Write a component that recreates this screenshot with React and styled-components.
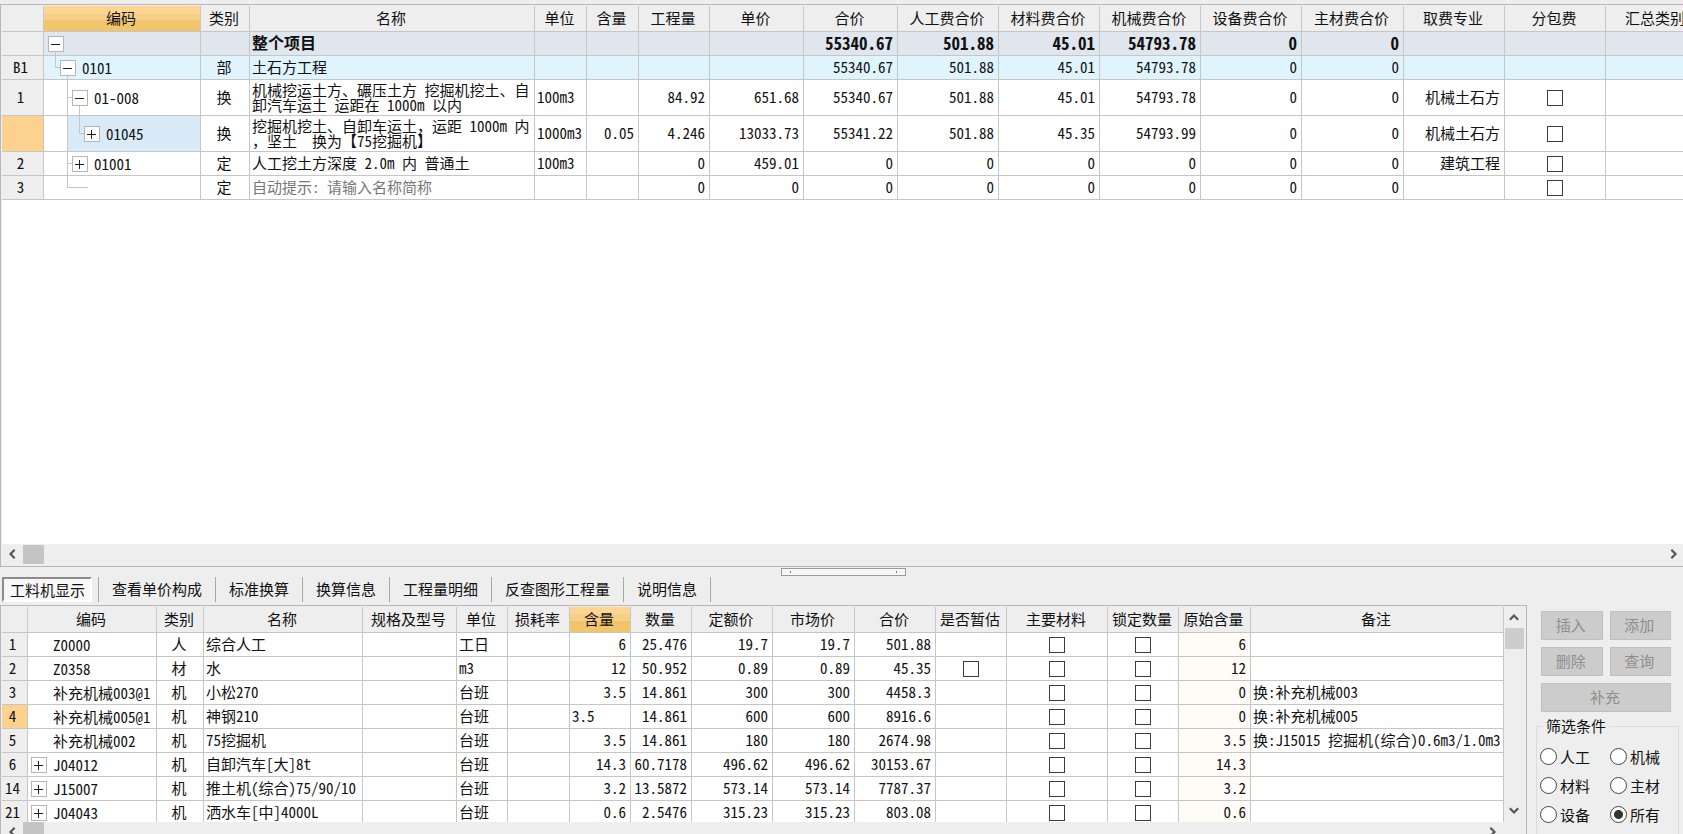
import React, { useState } from 'react';
import styled, { createGlobalStyle, css } from 'styled-components';

const LINE = '#c6c6c6';
const FACE = '#eeeeee';

const GlobalStyle = createGlobalStyle`
    * {
        box-sizing: border-box;
    }

    body {
        margin: 0;
        background: ${FACE};
    }

    body, button, input {
        font-family: "Noto Sans CJK SC", sans-serif;
        font-size: 15px;
        line-height: 20px;
        font-feature-settings: "hwid" 1;
        color: #111;
    }
`;

const Window = styled.div`
    display: flex;
    flex-direction: column;
    height: 100vh;
    overflow: hidden;
    padding-top: 4px;
`;

const TopPanel = styled.section`
    flex: 1;
    min-height: 0;
    display: flex;
    flex-direction: column;
    border: 1px solid #b8b8b8;
    border-width: 1px 0 1px 1px;
    padding: 1px 0 0 1px;
`;

const SheetArea = styled.div`
    flex: 1;
    min-height: 0;
    overflow: hidden;
    background: #fff;
`;

const Sheet = styled.table`
    table-layout: fixed;
    width: ${p => p.$width};
    border-collapse: separate;
    border-spacing: 0;
`;

const activeHead = css`
    background: linear-gradient(#fed691 0 30%, #f4d089 30% 55%, #f2c56b 55% 100%);
`;

const HeadCell = styled.th`
    height: 26px;
    padding: 0 2px 2px 0;
    font-weight: 400;
    text-align: center;
    white-space: nowrap;
    overflow: hidden;
    background: ${FACE};
    border-right: 1px solid ${LINE};
    border-bottom: 1px solid ${LINE};
    ${p => p.$active && activeHead}
`;

const RowHead = styled.th`
    padding: 0 4px 2px 0;
    font-weight: 400;
    text-align: center;
    background: ${p => (p.$active ? '#fdd28f' : FACE)};
    border-right: 1px solid ${LINE};
    border-bottom: 1px solid ${LINE};
`;

const Row = styled.tr`
    height: ${p => (p.$tall ? 36 : 24)}px;
    background: ${p => p.$tone || '#fff'};
`;

const Cell = styled.td`
    height: inherit;
    padding: 0 4px 2px 2px;
    text-align: ${p => p.$align || 'left'};
    white-space: nowrap;
    border-right: 1px solid ${LINE};
    border-bottom: 1px solid ${LINE};
    background: ${p => p.$fill || 'transparent'};
    color: ${p => (p.$hint ? '#777' : 'inherit')};
    font-weight: ${p => (p.$bold ? 700 : 400)};
    font-size: ${p => (p.$bold ? (p.$align === 'right' ? 17 : 16) : 15)}px;
`;

const NameCell = styled(Cell)`
    white-space: pre-wrap;
    padding-right: 0;
    line-height: 15px;
`;

const FullWidth = styled.span`
    font-feature-settings: normal;
`;

const CheckCell = styled(Cell)`
    padding: 0;
`;

const TreeCell = styled(Cell)`
    padding: 0 0 0 4px;
`;

const CodeCell = styled(Cell)`
    padding: 0 0 0 3px;
`;

const CodeLine = styled.div`
    display: flex;
    align-items: center;
    height: 100%;
    gap: 6px;
`;

const TreeLine = styled.div`
    display: flex;
    align-items: center;
    height: 100%;
`;

/* one indent step; the line runs 7px in, below the middle of the parent's box */
const Guide = styled.span`
    display: grid;
    grid-template-rows: 1fr 1fr;
    width: 12px;
    height: 100%;
    padding-left: 7px;

    &::before,
    &::after {
        content: "";
        border-left: 1px solid ${p => (p.$kind === 'blank' ? 'transparent' : LINE)};
    }

    &::before {
        border-bottom: 1px solid ${p => (p.$kind === 'tee' || p.$kind === 'elbow' ? LINE : 'transparent')};
    }

    &::after {
        border-left-color: ${p => (p.$kind === 'tee' || p.$kind === 'line' ? LINE : 'transparent')};
    }
`;

const Dash = styled.span`
    width: 16px;
    height: 1px;
    margin-bottom: 1px;
    background: ${LINE};
`;

const Node = styled.span`
    display: grid;
    grid-template-rows: 1fr 16px 1fr;
    width: 16px;
    height: 100%;
    margin-right: 6px;

    &::before {
        content: "";
    }

    &::after {
        content: "";
        margin-left: 7px;
        border-left: 1px solid ${p => (p.$open ? LINE : 'transparent')};
    }
`;

const Toggle = styled.button`
    display: flex;
    align-items: center;
    justify-content: center;
    width: 16px;
    height: 16px;
    padding: 0;
    background: #fff;
    border: 1px solid #b5b5b5;
`;

const Spacer = styled.span`
    width: 16px;
`;

const Check = styled.input.attrs({ type: 'checkbox' })`
    appearance: none;
    display: block;
    width: 16px;
    height: 16px;
    margin: 0 auto;
    border: 1px solid #3c3c3c;
    background: #fff;

    &:checked {
        box-shadow: inset 0 0 0 3px #fff;
        background: #3c3c3c;
    }
`;

const CellInput = styled.input`
    display: block;
    width: 100%;
    height: 20px;
    padding: 0;
    border: 0;
    outline: none;
    background: transparent;
`;

const HScroll = styled.div`
    display: flex;
    align-items: center;
    height: 22px;
    padding: 0 4px 2px 5px;
    background: ${FACE};
`;

const VScroll = styled.div`
    display: flex;
    flex-direction: column;
    align-items: center;
    width: 22px;
    padding: 3px 2px 4px 0;
    background: ${FACE};
`;

const ArrowButton = styled.button`
    display: flex;
    align-items: center;
    justify-content: center;
    width: 12px;
    height: 16px;
    padding: 0;
    border: 0;
    background: none;
`;

const HThumb = styled.span`
    width: 21px;
    height: 19px;
    margin: 0 auto 0 4px;
    background: #c4c4c4;
`;

const VThumb = styled.span`
    width: 19px;
    height: 21px;
    margin: 2px 0 auto;
    background: #cdcdcd;
`;

const Splitter = styled.div`
    display: flex;
    justify-content: center;
    height: 10px;
    padding: 1px 0 0 4px;
`;

const Grip = styled.div`
    display: flex;
    align-items: center;
    justify-content: space-between;
    width: 125px;
    height: 8px;
    padding: 0 8px;
    background: #f6f6f6;
    border: 1px solid #999;

    &::before,
    &::after {
        content: "";
        width: 1px;
        height: 2px;
        background: #777;
    }
`;

const TabBar = styled.nav`
    display: flex;
    align-items: stretch;
    height: 28px;
    padding: 0 0 3px 2px;
`;

const Tab = styled.button`
    padding: 0 13px 1px 13px;
    border: 0;
    border-right: 1px solid #a8a8a8;
    background: none;
    white-space: nowrap;
`;

const TabSlot = styled.div`
    display: flex;
    padding-right: 6px;
    border-right: 1px solid #a8a8a8;
`;

const ActiveTab = styled.button`
    padding: 0 5px 0 6px;
    border: 2px solid;
    border-color: #8c8c8c #fff #fff #8c8c8c;
    background: #f7f7f7;
    white-space: nowrap;
`;

const Bottom = styled.div`
    display: flex;
    height: 229px;
`;

const Detail = styled.section`
    flex: 1;
    min-width: 0;
    display: flex;
    flex-direction: column;
    border: 1px solid #b8b8b8;
    border-bottom: 0;
    padding: 1px 0 0 1px;
`;

const DetailBody = styled.div`
    display: flex;
    height: 215px;
`;

const DetailScroll = styled(HScroll)`
    padding-right: 28px;
`;

const Side = styled.aside`
    width: 156px;
    padding: 6px 4px 0 9px;
`;

const Actions = styled.div`
    display: grid;
    grid-template-columns: 1fr 1fr;
    gap: 7px;
    padding: 0 8px 0 5px;
`;

const Action = styled.button`
    height: 29px;
    padding: 0 2px 2px 0;
    border: 1px solid #bfbfbf;
    background: #cccccc;
    grid-column: ${p => (p.$wide ? '1 / -1' : 'auto')};

    &:disabled {
        color: #8e8e8e;
    }
`;

const Filter = styled.fieldset`
    display: grid;
    grid-template-columns: 70px 1fr;
    grid-auto-rows: 29px;
    align-items: center;
    height: 120px;
    margin: 4px 0 0;
    padding: 6px 0 0 3px;
    border: 1px solid #dcdcdc;

    legend {
        margin-left: 3px;
        padding: 0 3px;
    }
`;

const Option = styled.label`
    display: flex;
    align-items: center;
    gap: 3px;
`;

const Radio = styled.input.attrs({ type: 'radio' })`
    appearance: none;
    width: 17px;
    height: 17px;
    margin: 0;
    border: 1px solid #444;
    border-radius: 50%;
    background: #fff;

    &:checked {
        background: radial-gradient(#333 0 4px, #fff 5px);
    }
`;

const ARROWS = {
    left: 'M8 1 L3 6 L8 11',
    right: 'M4 1 L9 6 L4 11',
    up: 'M1 8 L6 3 L11 8',
    down: 'M1 4 L6 9 L11 4',
};

function Arrow({ to, label }) {
    return (
        <ArrowButton type="button" aria-label={label}>
            <svg width="10" height="10" viewBox="0 0 12 12" fill="none" stroke="#555" strokeWidth="2.6">
                <path d={ARROWS[to]} />
            </svg>
        </ArrowButton>
    );
}

function Expander({ open }) {
    return (
        <Toggle type="button" aria-expanded={open} aria-label={open ? '折叠' : '展开'}>
            <svg width="10" height="10" viewBox="0 0 10 10" stroke="#222" strokeWidth="1" shapeRendering="crispEdges">
                <path d={open ? 'M0 5.5 H9' : 'M0 5.5 H9 M4.5 1 V10'} />
            </svg>
        </Toggle>
    );
}

const topColumns = [
    ['', 42], ['编码', 157], ['类别', 49], ['名称', 285], ['单位', 52], ['含量', 52],
    ['工程量', 71], ['单价', 94], ['合价', 94], ['人工费合价', 101], ['材料费合价', 101],
    ['机械费合价', 101], ['设备费合价', 101], ['主材费合价', 102], ['取费专业', 101],
    ['分包费', 101], ['汇总类别', 101],
];

const topRows = [
    {
        no: '', guides: [], open: true, code: '', kind: '', name: '整个项目', unit: '', bold: true, tone: '#dfe6ee',
        nums: ['', '', '', '55340.67', '501.88', '45.01', '54793.78', '0', '0'], major: '',
    },
    {
        no: 'B1', guides: ['elbow'], open: true, code: '0101', kind: '部', name: '土石方工程', unit: '', tone: '#e0f4fe',
        nums: ['', '', '', '55340.67', '501.88', '45.01', '54793.78', '0', '0'], major: '',
    },
    {
        no: '1', guides: ['blank', 'tee'], open: true, code: '01-008', kind: '换', tall: true, check: true,
        name: '机械挖运土方、碾压土方 挖掘机挖土、自\n卸汽车运土 运距在 1000m 以内', unit: '100m3',
        nums: ['', '84.92', '651.68', '55340.67', '501.88', '45.01', '54793.78', '0', '0'], major: '机械土石方',
    },
    {
        no: '', guides: ['blank', 'line', 'elbow'], open: false, code: '01045', kind: '换', tall: true, check: true,
        selected: true, name: '挖掘机挖土、自卸车运土，运距 1000m 内\n，坚土  换为【75挖掘机】', unit: '1000m3',
        nums: ['0.05', '4.246', '13033.73', '55341.22', '501.88', '45.35', '54793.99', '0', '0'], major: '机械土石方',
    },
    {
        no: '2', guides: ['blank', 'tee'], open: false, code: '01001', kind: '定', check: true,
        name: '人工挖土方深度 2.0m 内 普通土', unit: '100m3',
        nums: ['', '0', '459.01', '0', '0', '0', '0', '0', '0'], major: '建筑工程',
    },
    {
        no: '3', guides: ['blank', 'elbow'], leaf: true, code: '', kind: '定', check: true, hint: true,
        name: '自动提示: 请输入名称简称', unit: '',
        nums: ['', '0', '0', '0', '0', '0', '0', '0', '0'], major: '',
    },
];

const detailColumns = [
    ['', 26], ['编码', 129], ['类别', 47], ['名称', 159], ['规格及型号', 94], ['单位', 51],
    ['损耗率', 62], ['含量', 61], ['数量', 61], ['定额价', 81], ['市场价', 82], ['合价', 81],
    ['是否暂估', 71], ['主要材料', 101], ['锁定数量', 71], ['原始含量', 72], ['备注', 0],
];

const detailRows = [
    { no: '1', code: 'Z0000', kind: '人', name: '综合人工', unit: '工日', nums: ['6', '25.476', '19.7', '19.7', '501.88'], origin: '6', note: '' },
    { no: '2', code: 'Z0358', kind: '材', name: '水', unit: 'm3', nums: ['12', '50.952', '0.89', '0.89', '45.35'], estimate: true, origin: '12', note: '' },
    { no: '3', code: '补充机械003@1', kind: '机', name: '小松270', unit: '台班', nums: ['3.5', '14.861', '300', '300', '4458.3'], origin: '0', note: '换:补充机械003' },
    { no: '4', code: '补充机械005@1', kind: '机', name: '神钢210', unit: '台班', nums: ['3.5', '14.861', '600', '600', '8916.6'], editing: true, origin: '0', note: '换:补充机械005' },
    { no: '5', code: '补充机械002', kind: '机', name: '75挖掘机', unit: '台班', nums: ['3.5', '14.861', '180', '180', '2674.98'], origin: '3.5', note: '换:J15015 挖掘机(综合)0.6m3/1.0m3' },
    { no: '6', code: 'J04012', group: true, kind: '机', name: '自卸汽车[大]8t', unit: '台班', nums: ['14.3', '60.7178', '496.62', '496.62', '30153.67'], origin: '14.3', note: '' },
    { no: '14', code: 'J15007', group: true, kind: '机', name: '推土机(综合)75/90/10', unit: '台班', nums: ['3.2', '13.5872', '573.14', '573.14', '7787.37'], origin: '3.2', note: '' },
    { no: '21', code: 'J04043', group: true, kind: '机', name: '洒水车[中]4000L', unit: '台班', nums: ['0.6', '2.5476', '315.23', '315.23', '803.08'], origin: '0.6', note: '' },
];

const tabs = ['查看单价构成', '标准换算', '换算信息', '工程量明细', '反查图形工程量', '说明信息'];
const filters = ['人工', '机械', '材料', '主材', '设备', '所有'];

const Col = styled.col`
    width: ${p => (p.$w ? `${p.$w}px` : 'auto')};
`;

function Head({ columns, active }) {
    return (
        <>
            <colgroup>
                {columns.map(([title, w], i) => <Col key={i} $w={w} />)}
            </colgroup>
            <thead>
                <tr>
                    {columns.map(([title], i) => (
                        <HeadCell key={i} scope="col" $active={title === active}>{title}</HeadCell>
                    ))}
                </tr>
            </thead>
        </>
    );
}

// commas and brackets keep their full width between Chinese characters
function ItemName({ text }) {
    return text.split(/([，【】])/).map((part, i) => (
        i % 2 ? <FullWidth key={i}>{part}</FullWidth> : part
    ));
}

function BudgetTable() {
    return (
        <Sheet $width="1704px">
            <Head columns={topColumns} active="编码" />
            <tbody>
                {topRows.map((row, r) => (
                    <Row key={r} $tall={row.tall} $tone={row.tone}>
                        <RowHead scope="row" $active={row.selected}>{row.no}</RowHead>
                        <TreeCell $fill={row.selected && 'linear-gradient(90deg, #fff 24px, #d9eaf8 24px)'}>
                            <TreeLine>
                                {row.guides.map((kind, i) => <Guide key={i} $kind={kind} />)}
                                {row.leaf
                                    ? <Dash />
                                    : <Node $open={row.open}><Expander open={row.open} /></Node>}
                                {row.code}
                            </TreeLine>
                        </TreeCell>
                        <Cell $align="center">{row.kind}</Cell>
                        <NameCell $bold={row.bold} $hint={row.hint}><ItemName text={row.name} /></NameCell>
                        <Cell>{row.unit}</Cell>
                        {row.nums.map((n, i) => (
                            <Cell key={i} $align="right" $bold={row.bold}>{n}</Cell>
                        ))}
                        <Cell $align="right">{row.major}</Cell>
                        <CheckCell>{row.check && <Check aria-label={`分包费 ${row.no}`} />}</CheckCell>
                        <Cell />
                    </Row>
                ))}
            </tbody>
        </Sheet>
    );
}

function DetailTable() {
    const [amount, setAmount] = useState('3.5');

    return (
        <Sheet $width="100%">
            <Head columns={detailColumns} active="含量" />
            <tbody>
                {detailRows.map(row => (
                    <Row key={row.no}>
                        <RowHead scope="row" $active={row.editing}>{row.no}</RowHead>
                        <CodeCell>
                            <CodeLine>
                                {row.group ? <Expander open={false} /> : <Spacer />}
                                {row.code}
                            </CodeLine>
                        </CodeCell>
                        <Cell $align="center">{row.kind}</Cell>
                        <Cell>{row.name}</Cell>
                        <Cell />
                        <Cell>{row.unit}</Cell>
                        <Cell />
                        {row.nums.map((n, i) => (
                            <Cell key={i} $align="right">
                                {row.editing && i === 0
                                    ? <CellInput aria-label="含量" value={amount} onChange={e => setAmount(e.target.value)} />
                                    : n}
                            </Cell>
                        ))}
                        <CheckCell>{row.estimate && <Check aria-label={`是否暂估 ${row.no}`} />}</CheckCell>
                        <CheckCell><Check aria-label={`主要材料 ${row.no}`} /></CheckCell>
                        <CheckCell><Check aria-label={`锁定数量 ${row.no}`} /></CheckCell>
                        <Cell $align="right" $fill="#fffcf7">{row.origin}</Cell>
                        <Cell>{row.note}</Cell>
                    </Row>
                ))}
            </tbody>
        </Sheet>
    );
}

export default function App() {
    const [filter, setFilter] = useState('所有');

    return (
        <Window>
            <GlobalStyle />
            <TopPanel>
                <SheetArea>
                    <BudgetTable />
                </SheetArea>
                <HScroll>
                    <Arrow to="left" label="向左" />
                    <HThumb />
                    <Arrow to="right" label="向右" />
                </HScroll>
            </TopPanel>

            <Splitter>
                <Grip />
            </Splitter>

            <TabBar>
                <TabSlot>
                    <ActiveTab type="button">工料机显示</ActiveTab>
                </TabSlot>
                {tabs.map(t => <Tab key={t} type="button">{t}</Tab>)}
            </TabBar>

            <Bottom>
                <Detail>
                    <DetailBody>
                        <SheetArea>
                            <DetailTable />
                        </SheetArea>
                        <VScroll>
                            <Arrow to="up" label="向上" />
                            <VThumb />
                            <Arrow to="down" label="向下" />
                        </VScroll>
                    </DetailBody>
                    <DetailScroll>
                        <Arrow to="left" label="向左" />
                        <HThumb />
                        <Arrow to="right" label="向右" />
                    </DetailScroll>
                </Detail>

                <Side>
                    <Actions>
                        <Action type="button" disabled>插入</Action>
                        <Action type="button" disabled>添加</Action>
                        <Action type="button" disabled>删除</Action>
                        <Action type="button" disabled>查询</Action>
                        <Action type="button" disabled $wide>补充</Action>
                    </Actions>
                    <Filter>
                        <legend>筛选条件</legend>
                        {filters.map(f => (
                            <Option key={f}>
                                <Radio name="filter" checked={filter === f} onChange={() => setFilter(f)} />
                                {f}
                            </Option>
                        ))}
                    </Filter>
                </Side>
            </Bottom>
        </Window>
    );
}
